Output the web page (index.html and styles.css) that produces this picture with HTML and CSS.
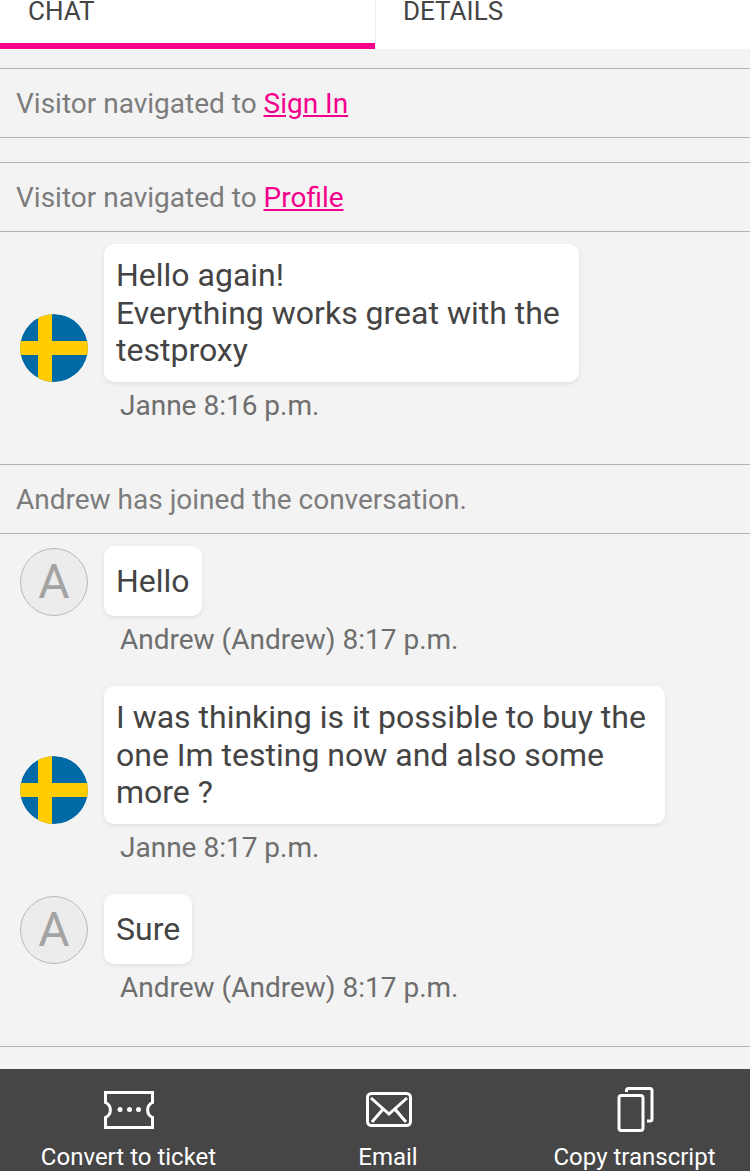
FILE: index.html
```html
<!DOCTYPE html>
<html lang="en">
<head>
    <meta charset="UTF-8">
    <meta name="viewport" content="width=device-width, initial-scale=1.0">
    <title>Chat</title>
    <link rel="stylesheet" href="styles.css">
</head>
<body>

    <!-- Tabs -->
    <div class="tabs">
        <div class="tab active">CHAT</div>
        <div class="tab">DETAILS</div>
    </div>

    <!-- Conversation -->
    <div class="chat">
        <div class="event">Visitor navigated to <a href="#">Sign In</a></div>
        <div class="event">Visitor navigated to <a href="#">Profile</a></div>

        <div class="msg">
            <div class="msg-row">
                <svg class="avatar" viewBox="0 0 68 68">
                    <circle cx="34" cy="34" r="34" fill="#006aa7"/>
                    <path d="M18 0h14v68H18zM0 27h68v14H0z" fill="#fecc00"/>
                </svg>
                <div class="bubble">Hello again!<br>Everything works great with the testproxy</div>
            </div>
            <div class="meta">Janne 8:16 p.m.</div>
        </div>

        <div class="event">Andrew has joined the conversation.</div>

        <div class="msg">
            <div class="msg-row">
                <div class="avatar letter">A</div>
                <div class="bubble short">Hello</div>
            </div>
            <div class="meta">Andrew (Andrew) 8:17 p.m.</div>
        </div>

        <div class="msg">
            <div class="msg-row">
                <svg class="avatar" viewBox="0 0 68 68">
                    <circle cx="34" cy="34" r="34" fill="#006aa7"/>
                    <path d="M18 0h14v68H18zM0 27h68v14H0z" fill="#fecc00"/>
                </svg>
                <div class="bubble wide">I was thinking is it possible to buy the one Im testing now and also some more ?</div>
            </div>
            <div class="meta">Janne 8:17 p.m.</div>
        </div>

        <div class="msg">
            <div class="msg-row">
                <div class="avatar letter">A</div>
                <div class="bubble short">Sure</div>
            </div>
            <div class="meta">Andrew (Andrew) 8:17 p.m.</div>
        </div>

        <div class="event"></div>
    </div>

    <!-- Actions -->
    <div class="actions">
        <div class="action">
            <svg class="icon" width="52" height="38" viewBox="0 0 52 38">
                <path d="M2.5 1.5h47v10c-6.500 3-6.500 12 0 15v10h-47v-10c6.500-3 6.500-12 0-15z"/>
                <g class="dots">
                    <circle cx="17" cy="18.500" r="2.500"/>
                    <circle cx="26.500" cy="18.500" r="2.500"/>
                    <circle cx="35.500" cy="18.500" r="2.500"/>
                </g>
            </svg>
            <span>Convert to ticket</span>
        </div>
        <div class="action">
            <svg class="icon" width="48" height="38" viewBox="0 0 48 38">
                <rect x="3.500" y="2.500" width="43" height="32" rx="4"/>
                <path d="M7 7l18 16L43 7M8 31l12-14M42 31L30 17"/>
            </svg>
            <span>Email</span>
        </div>
        <div class="action">
            <svg class="icon" width="38" height="46" viewBox="0 0 38 46">
                <rect x="3" y="8.500" width="24" height="35" rx="2.500"/>
                <path d="M10.500 5V3.500a2 2 0 0 1 2-2H34a2 2 0 0 1 2 2V32a2 2 0 0 1-2 2h-3"/>
            </svg>
            <span>Copy transcript</span>
        </div>
    </div>

</body>
</html>
```

FILE: styles.css
```css
body {
    font-family: Roboto, "Liberation Sans", sans-serif;
    margin: 0;
    padding: 0;
    height: 1171px;
    overflow: hidden;
    background-color: #f3f3f3;
    display: flex;
    flex-direction: column;
}

/* Tabs */
.tabs {
    display: flex;
    height: 49px;
    flex-shrink: 0;
    background: #fff;
}
.tab {
    width: 375px;
    box-sizing: border-box;
    padding-left: 28px;
    font-size: 26px;
    line-height: 22px;
    color: #444;
    overflow: hidden;
}
.tab + .tab {
    padding-left: 27px;
    border-left: 1px solid #eee;
}
.tab.active {
    height: 49px;
    border-bottom: 6px solid #f5008c;
}

/* Conversation */
.chat {
    flex: 1;
    overflow: hidden;
    padding-top: 19px;
}
.event {
    height: 70px;
    box-sizing: border-box;
    border-top: 1px solid #b3b3b3;
    border-bottom: 1px solid #b3b3b3;
    padding-left: 16px;
    margin-bottom: 24px;
    font-size: 28px;
    line-height: 70px;
    color: #7c7c7c;
}
.event + .msg {
    margin-top: -12px;
}
.msg + .event {
    margin-top: 12px;
}
.event a {
    color: #f5008c;
}
.msg-row {
    display: flex;
    align-items: flex-end;
    padding-left: 20px;
}
.avatar {
    width: 68px;
    height: 68px;
    flex-shrink: 0;
    margin-right: 16px;
    border-radius: 50%;
}
.letter {
    box-sizing: border-box;
    border: 1px solid #b8b8b8;
    background: #ececec;
    color: #a3a3a3;
    font-size: 48px;
    line-height: 66px;
    text-align: center;
}
.bubble {
    box-sizing: border-box;
    max-width: 475px;
    padding: 13px 12px 12.5px;
    background: #fff;
    border-radius: 10px;
    box-shadow: 0 2px 5px rgba(0, 0, 0, 0.08);
    font-size: 32px;
    line-height: 37.5px;
    color: #444;
}
.bubble.wide {
    max-width: 561px;
}
.bubble.short {
    padding: 16.5px 12px 16px;
}
.meta {
    height: 70px;
    box-sizing: border-box;
    padding: 5px 0 0 120px;
    font-size: 28px;
    line-height: 38px;
    color: #6e6e6e;
}

/* Actions */
.actions {
    height: 102px;
    flex-shrink: 0;
    display: grid;
    grid-template-columns: 257px 262px 231px;
    background: #464646;
    color: #fff;
    font-size: 24px;
    overflow: hidden;
}
.action {
    display: flex;
    flex-direction: column;
    align-items: center;
}
.icon {
    height: 46px;
    margin-top: 18px;
    margin-bottom: 10px;
    fill: none;
    stroke: #fff;
    stroke-width: 3;
}
.icon .dots {
    fill: #fff;
    stroke: none;
}
```
